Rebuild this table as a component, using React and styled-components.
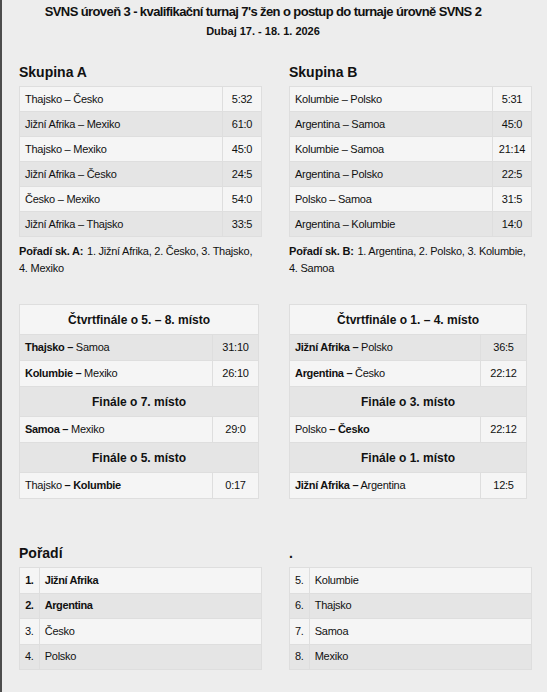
import React from "react";
import styled, { createGlobalStyle } from "styled-components";

const GlobalStyle = createGlobalStyle`
  html, body {
    margin: 0;
    padding: 0;
    background: #ededed;
  }
  body {
    font-family: "Liberation Sans", Arial, sans-serif;
    color: #111;
  }
`;

const Page = styled.div`
  min-height: 692px;
  box-sizing: border-box;
  border-left: 2px solid #4d4d4d;
  padding: 4px 15px 20px 17px;
`;

const Header = styled.header`
  text-align: center;
  padding-right: 25px;
`;

const Title = styled.h1`
  margin: 0;
  font-size: 13px;
  line-height: 16px;
  font-weight: bold;
  letter-spacing: -0.6px;
`;

const Subtitle = styled.div`
  margin-top: 5px;
  font-size: 11px;
  line-height: 13px;
  font-weight: bold;
`;

const Columns = styled.div`
  display: grid;
  grid-template-columns: 243px 243px;
  column-gap: 27px;
  margin-top: ${(p) => p.$top || 0}px;
`;

const Heading = styled.h2`
  margin: 0 0 6px;
  font-size: 14px;
  line-height: 16px;
  font-weight: bold;
`;

const Table = styled.table`
  width: ${(p) => p.$width || 243}px;
  border-collapse: collapse;
  font-size: 11px;
  letter-spacing: -0.25px;
  border: 1px solid #dedede;

  tr:nth-child(odd) td {
    background: #f5f5f5;
  }
  tr:nth-child(even) td {
    background: #e5e5e5;
  }
  b {
    letter-spacing: -0.3px;
  }
`;

const Cell = styled.td`
  border: 1px solid #dedede;
  height: ${(p) => p.$h || 25}px;
  padding: 0 5px;
  line-height: 13px;
  text-align: ${(p) => (p.$center ? "center" : "left")};
  width: ${(p) => (p.$w ? `${p.$w}px` : "auto")};
  font-weight: ${(p) => (p.$bold ? "bold" : "normal")};
  letter-spacing: ${(p) => (p.$bold ? "-0.4px" : "inherit")};
  box-sizing: border-box;
`;

const StageCell = styled.td`
  height: 29px;
  padding: 0;
  text-align: center;
  font-size: 12px;
  font-weight: bold;
  letter-spacing: 0;
  border: 1px solid #dedede;
`;

const Note = styled.p`
  margin: 6px 0 0;
  font-size: 11px;
  line-height: 17px;
  letter-spacing: -0.25px;
`;

const NoteLabel = styled.b`
  letter-spacing: -0.2px;
  margin-right: 1px;
`;

const groups = [
  {
    name: "Skupina A",
    matches: [
      ["Thajsko – Česko", "5:32"],
      ["Jižní Afrika – Mexiko", "61:0"],
      ["Thajsko – Mexiko", "45:0"],
      ["Jižní Afrika – Česko", "24:5"],
      ["Česko – Mexiko", "54:0"],
      ["Jižní Afrika – Thajsko", "33:5"],
    ],
    label: "Pořadí sk. A:",
    order: "1. Jižní Afrika, 2. Česko, 3. Thajsko, 4. Mexiko",
  },
  {
    name: "Skupina B",
    matches: [
      ["Kolumbie – Polsko", "5:31"],
      ["Argentina – Samoa", "45:0"],
      ["Kolumbie – Samoa", "21:14"],
      ["Argentina – Polsko", "22:5"],
      ["Polsko – Samoa", "31:5"],
      ["Argentina – Kolumbie", "14:0"],
    ],
    label: "Pořadí sk. B:",
    order: "1. Argentina, 2. Polsko, 3. Kolumbie, 4. Samoa",
  },
];

// home, away, winner ("h" / "a"), score
const brackets = [
  {
    width: 240,
    stages: [
      {
        title: "Čtvrtfinále o 5. – 8. místo",
        games: [
          ["Thajsko", "Samoa", "h", "31:10"],
          ["Kolumbie", "Mexiko", "h", "26:10"],
        ],
      },
      { title: "Finále o 7. místo", games: [["Samoa", "Mexiko", "h", "29:0"]] },
      { title: "Finále o 5. místo", games: [["Thajsko", "Kolumbie", "a", "0:17"]] },
    ],
  },
  {
    width: 238,
    stages: [
      {
        title: "Čtvrtfinále o 1. – 4. místo",
        games: [
          ["Jižní Afrika", "Polsko", "h", "36:5"],
          ["Argentina", "Česko", "h", "22:12"],
        ],
      },
      { title: "Finále o 3. místo", games: [["Polsko", "Česko", "a", "22:12"]] },
      { title: "Finále o 1. místo", games: [["Jižní Afrika", "Argentina", "h", "12:5"]] },
    ],
  },
];

const standings = [
  { title: "Pořadí", rows: [["1.", "Jižní Afrika", true], ["2.", "Argentina", true], ["3.", "Česko"], ["4.", "Polsko"]] },
  { title: ".", rows: [["5.", "Kolumbie"], ["6.", "Thajsko"], ["7.", "Samoa"], ["8.", "Mexiko"]] },
];

const Game = ({ home, away, win }) =>
  win === "h" ? (
    <>
      <b>{home} –</b> {away}
    </>
  ) : (
    <>
      {home} <b>– {away}</b>
    </>
  );

const App = () => {
  return (
    <Page>
      <GlobalStyle />
      <Header>
        <Title>SVNS úroveň 3 - kvalifikační turnaj 7's žen o postup do turnaje úrovně SVNS 2</Title>
        <Subtitle>Dubaj 17. - 18. 1. 2026</Subtitle>
      </Header>

      <Columns $top={26}>
        {groups.map((g) => (
          <section key={g.name}>
            <Heading>{g.name}</Heading>
            <Table>
              <tbody>
                {g.matches.map(([m, s]) => (
                  <tr key={m}>
                    <Cell>{m}</Cell>
                    <Cell $w={39} $center>
                      {s}
                    </Cell>
                  </tr>
                ))}
              </tbody>
            </Table>
            <Note>
              <NoteLabel>{g.label}</NoteLabel> {g.order}
            </Note>
          </section>
        ))}
      </Columns>

      <Columns $top={27}>
        {brackets.map((b, i) => (
          <Table key={i} $width={b.width}>
            <tbody>
              {b.stages.map((st) => (
                <React.Fragment key={st.title}>
                  <tr>
                    <StageCell colSpan={2}>{st.title}</StageCell>
                  </tr>
                  {st.games.map(([h, a, w, s]) => (
                    <tr key={h + a}>
                      <Cell $h={26}>
                        <Game home={h} away={a} win={w} />
                      </Cell>
                      <Cell $h={26} $w={46} $center>
                        {s}
                      </Cell>
                    </tr>
                  ))}
                </React.Fragment>
              ))}
            </tbody>
          </Table>
        ))}
      </Columns>

      <Columns $top={46}>
        {standings.map((t) => (
          <section key={t.title}>
            <Heading>{t.title}</Heading>
            <Table>
              <tbody>
                {t.rows.map(([n, team, bold]) => (
                  <tr key={n}>
                    <Cell $h={25.5} $w={18} $center $bold={bold}>
                      {n}
                    </Cell>
                    <Cell $h={25.5} $bold={bold}>
                      {team}
                    </Cell>
                  </tr>
                ))}
              </tbody>
            </Table>
          </section>
        ))}
      </Columns>
    </Page>
  );
};

export default App;
